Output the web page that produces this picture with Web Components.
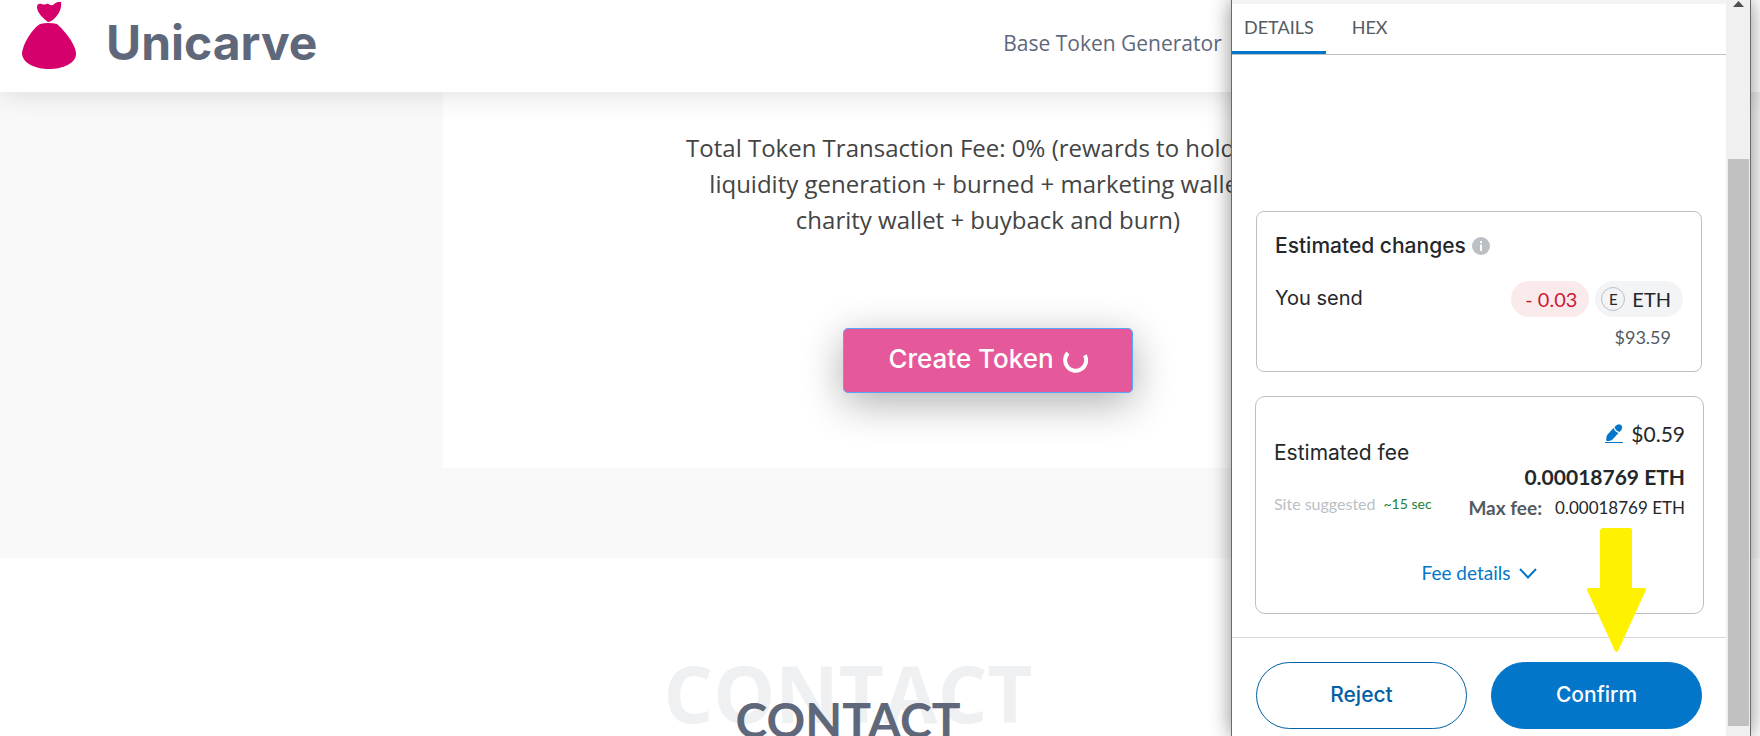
<!DOCTYPE html>
<html lang="en">
<head>
  <meta charset="utf-8">
  <meta name="viewport" content="width=device-width, initial-scale=1">
  <title>Unicarve</title>
  <style>
    :root {
      --ink: #24272a;
      --muted: #535a61;
      --line: #bbc0c5;
      --blue: #0376c9;
      --slate: #5f687b;
      --font-body: "Open Sans", sans-serif;
      --font-heading: Inter, sans-serif;
      --font-wallet: Inter, sans-serif;
      --font-number: Lato, sans-serif;
    }
    body {
      margin: 0;
      height: 100vh;
      overflow: hidden;
      position: relative;
      background: #fff;
      font-family: var(--font-body);
    }
  </style>
</head>
<body>
  <site-header></site-header>
  <token-section>
    Total Token Transaction Fee: 0% (rewards to holders + liquidity generation + burned + marketing wallet + charity wallet + buyback and burn)
  </token-section>
  <contact-heading>CONTACT</contact-heading>
  <wallet-popup>
    <wallet-tabs></wallet-tabs>
    <wallet-changes></wallet-changes>
    <wallet-fee></wallet-fee>
    <wallet-actions slot="footer"></wallet-actions>
  </wallet-popup>

  <script>
    class SiteHeader extends HTMLElement {
      connectedCallback() {
        this.attachShadow({ mode: 'open' });
        this.shadowRoot.innerHTML = `
      <style>
        :host {
          display: block;
          position: relative;
          z-index: 1;
          background: #fff;
          box-shadow: 0 2px 30px rgba(0, 0, 0, 0.13);
        }
        header {
          display: grid;
          grid-template-columns: 57fr 43fr;
          align-items: center;
          padding: 2px 0 9px;
        }
        a {
          color: var(--slate);
          text-decoration: none;
        }
        .logo {
          display: flex;
          align-items: center;
          gap: 30px;
          padding-left: 22px;
          font: 700 48px/48px var(--font-heading);
        }
        .logo svg {
          width: 54px;
          height: 81px;
        }
        nav a {
          font-size: 21px;
          line-height: 28px;
        }
      </style>
      <header>
        <a href="#" class="logo">
          <svg viewBox="0 0 54 81" fill="#d6006c" aria-hidden="true">
            <path d="M26 20C22 17 15 11 15 5C15 2 17 1 20 2Q22 3 24 2Q26 1 28 3Q31 4 32 2Q36 -1 39 0C40 6 37 12 33 16Q29 20 26 20Z"/>
            <path d="M18 22Q26 20 35 22C43 29 54 43 54 52C54 61 41 67 27 67C13 67 0 61 0 51C1 42 9 28 18 22Z"/>
          </svg>
          <span>Unicarve</span>
        </a>
        <nav><a href="#generator">Base Token Generator</a></nav>
      </header>
    `;
      }
    }

    class TokenSection extends HTMLElement {
      connectedCallback() {
        this.attachShadow({ mode: 'open' });
        this.shadowRoot.innerHTML = `
      <style>
        :host {
          display: block;
          background: #f9f9f9;
          padding: 0 64px 90px 0;
        }
        .container {
          max-width: 1370px;
          margin: 0 auto;
          padding-left: 280px;
          box-sizing: border-box;
        }
        .card {
          display: flex;
          flex-direction: column;
          align-items: center;
          gap: 90px;
          padding: 38px 24px 75px;
          background: #fff;
        }
        p {
          margin: 0;
          max-width: 616px;
          text-align: center;
          color: #444;
          font-size: 24px;
          line-height: 36px;
        }
        button {
          display: flex;
          align-items: center;
          gap: 8px;
          padding: 14px 44px 17px;
          border: 1px solid #58a6f7;
          border-radius: 5px;
          background: #e5589a;
          color: #fff;
          font: 500 26px/32px var(--font-heading);
          box-shadow: 0 10px 40px rgba(0, 0, 0, 0.32);
        }
        svg {
          width: 26px;
          height: 26px;
          margin-top: 4px;
        }
      </style>
      <div class="container">
        <div class="card">
          <p><slot></slot></p>
          <button type="button">
            <span>Create Token</span>
            <svg viewBox="0 0 26 26" fill="none" stroke="#fff" stroke-width="4" aria-hidden="true">
              <path d="M6 5A10.500 10.500 0 1 0 22.800 7.200"/>
            </svg>
          </button>
        </div>
      </div>
    `;
      }
    }

    class ContactHeading extends HTMLElement {
      connectedCallback() {
        this.attachShadow({ mode: 'open' });
        this.shadowRoot.innerHTML = `
      <style>
        :host {
          display: block;
          padding: 138px 64px 0 0;
        }
        h2 {
          position: relative;
          margin: 0;
          text-align: center;
          color: var(--slate);
          font: 700 48px/48px var(--font-number);
        }
        .back {
          position: absolute;
          inset: -42px 0 auto;
          color: #eff0f2;
          font: 700 78px/78px var(--font-body);
        }
        .front {
          position: relative;
        }
      </style>
      <h2>
        <span class="back" aria-hidden="true">CONTACT</span>
        <span class="front"><slot></slot></span>
      </h2>
    `;
      }
    }

    class WalletPopup extends HTMLElement {
      connectedCallback() {
        this.attachShadow({ mode: 'open' });
        this.shadowRoot.innerHTML = `
      <style>
        :host {
          position: absolute;
          top: 0;
          right: 9px;
          bottom: 0;
          z-index: 2;
          width: 520px;
          max-width: 100%;
          box-sizing: border-box;
          display: grid;
          grid-template-columns: 1fr 24px;
          grid-template-rows: minmax(0, 1fr);
          border: solid #6a6a6a;
          border-width: 0 1px;
          background: #fff;
          color: var(--ink);
          box-shadow: 0 0 20px rgba(0, 0, 0, 0.45);
        }
        .content {
          border-top: 4px solid #f2f4f6;
        }
        .rail {
          display: flex;
          flex-direction: column;
          padding: 0 1px 0 2px;
          background: #f0f0f0;
        }
        .rail svg {
          height: 22px;
        }
        .before {
          flex: 137;
        }
        .thumb {
          flex: 567;
          background: #c1c1c1;
        }
        .after {
          flex: 10;
        }
      </style>
      <div class="content">
        <slot></slot>
        <slot name="footer"></slot>
      </div>
      <div class="rail" aria-hidden="true">
        <svg viewBox="0 0 21 22" fill="#505050"><path d="M5 7L10.500 1L16 7Z"/></svg>
        <div class="before"></div>
        <div class="thumb"></div>
        <div class="after"></div>
      </div>
    `;
      }
    }

    class WalletTabs extends HTMLElement {
      connectedCallback() {
        this.attachShadow({ mode: 'open' });
        this.shadowRoot.innerHTML = `
      <style>
        :host {
          display: flex;
          gap: 14px;
          border-bottom: 1px solid var(--line);
          margin-bottom: 156px;
        }
        button {
          padding: 11px 12px 12px;
          border: 0;
          border-bottom: 3px solid transparent;
          background: none;
          color: var(--muted);
          font: 400 18px/24px var(--font-number);
        }
        .active {
          border-bottom-color: var(--blue);
        }
      </style>
      <button type="button" class="active">DETAILS</button>
      <button type="button">HEX</button>
    `;
      }
    }

    class WalletChanges extends HTMLElement {
      connectedCallback() {
        this.attachShadow({ mode: 'open' });
        this.shadowRoot.innerHTML = `
      <style>
        :host {
          display: block;
          margin: 0 24px;
          padding: 20px 18px 22px;
          border: 1px solid var(--line);
          border-radius: 8px;
        }
        h3 {
          display: flex;
          align-items: center;
          gap: 6px;
          margin: 0 0 21px;
          font: 500 21px/28px var(--font-wallet);
        }
        h3 svg {
          width: 18px;
          height: 18px;
        }
        .row {
          display: flex;
          align-items: flex-start;
          gap: 6px;
        }
        .label {
          flex: 1;
          font: 400 20px/34px var(--font-wallet);
        }
        .pill {
          display: flex;
          align-items: center;
          gap: 7px;
          height: 36px;
          box-sizing: border-box;
          padding: 0 12px 0 14px;
          border-radius: 18px;
          background: #f2f4f6;
          font: 400 20px/28px var(--font-number);
        }
        .minus {
          background: #fbeaec;
          color: #ca1b35;
        }
        .asset {
          padding-left: 6px;
        }
        .token {
          width: 24px;
          height: 24px;
          box-sizing: border-box;
          border: 1px solid var(--line);
          border-radius: 50%;
          text-align: center;
          font-size: 15px;
          line-height: 22px;
        }
        .fiat {
          margin-top: 8px;
          padding-right: 12px;
          text-align: right;
          color: var(--muted);
          font: 400 18px/24px var(--font-number);
        }
      </style>
      <h3>
        Estimated changes
        <svg viewBox="0 0 18 18" aria-hidden="true">
          <circle cx="9" cy="9" r="9" fill="#bbc0c5"/>
          <path d="M8 4h2v2H8zM8 7.500h2V14H8z" fill="#fff"/>
        </svg>
      </h3>
      <div class="row">
        <span class="label">You send</span>
        <span class="pill minus">- 0.03</span>
        <span class="pill asset"><span class="token">E</span>ETH</span>
      </div>
      <div class="fiat">$93.59</div>
    `;
      }
    }

    class WalletFee extends HTMLElement {
      connectedCallback() {
        this.attachShadow({ mode: 'open' });
        this.shadowRoot.innerHTML = `
      <style>
        :host {
          display: block;
          margin: 24px 22px 23px 23px;
          padding: 23px 18px 28px;
          border: 1px solid var(--line);
          border-radius: 10px;
          font: 400 21px/28px var(--font-number);
        }
        .columns {
          display: flex;
          justify-content: space-between;
        }
        .left {
          display: flex;
          flex-direction: column;
          gap: 25px;
          padding-top: 19px;
        }
        .label {
          font-family: var(--font-wallet);
        }
        .speed {
          display: flex;
          gap: 8px;
          color: var(--line);
          font-size: 16px;
          line-height: 24px;
        }
        .time {
          color: #1c8234;
          font-size: 14px;
        }
        .right {
          text-align: right;
        }
        .fiat {
          display: flex;
          align-items: center;
          justify-content: flex-end;
          gap: 8px;
          margin-bottom: 15px;
        }
        .edit {
          display: flex;
          padding: 0;
          border: 0;
          background: none;
        }
        .edit svg {
          width: 18px;
          height: 20px;
        }
        .amount {
          font-weight: 700;
          margin-bottom: 5px;
        }
        .max {
          display: flex;
          justify-content: flex-end;
          gap: 13px;
          font-size: 17px;
          line-height: 24px;
        }
        .max b {
          color: var(--muted);
          font-size: 19px;
        }
        .details {
          display: flex;
          align-items: center;
          gap: 9px;
          margin: 41px auto 0;
          padding: 0;
          border: 0;
          background: none;
          color: var(--blue);
          font: 400 19px/24px var(--font-number);
        }
        .details svg {
          width: 18px;
          height: 11px;
        }
      </style>
      <div class="columns">
        <div class="left">
          <span class="label">Estimated fee</span>
          <span class="speed"><span>Site suggested</span><span class="time">~15 sec</span></span>
        </div>
        <div class="right">
          <div class="fiat">
            <button type="button" class="edit" aria-label="Edit">
              <svg viewBox="0 0 18 20" fill="#0376c9" aria-hidden="true">
                <path d="M8.500 4Q10 8 13.500 9L7.500 15.500Q6 17 1.500 17Q0.500 13 3 10Z"/>
                <path d="M9.500 3Q13 -1 16 1Q19 4 14.500 8Q10.500 7 9.500 3Z"/>
                <path d="M0 18h18v1H0z"/>
              </svg>
            </button>
            <span>$0.59</span>
          </div>
          <div class="amount">0.00018769 ETH</div>
          <div class="max"><b>Max fee:</b><span>0.00018769 ETH</span></div>
        </div>
      </div>
      <button type="button" class="details">
        Fee details
        <svg viewBox="0 0 18 11" fill="none" stroke="#0376c9" stroke-width="2" aria-hidden="true"><path d="M1 1L9 9.500L17 1"/></svg>
      </button>
    `;
      }
    }

    class WalletActions extends HTMLElement {
      connectedCallback() {
        this.attachShadow({ mode: 'open' });
        this.shadowRoot.innerHTML = `
      <style>
        :host {
          position: relative;
          display: flex;
          gap: 24px;
          padding: 24px;
          border-top: 1px solid #d6d9dc;
        }
        button {
          flex: 1;
          padding: 18px 0 19px;
          border: 1px solid #0260a4;
          border-radius: 34px;
          background: #fff;
          color: #0260a4;
          font: 500 21px/28px var(--font-wallet);
        }
        .confirm {
          border-color: var(--blue);
          background: var(--blue);
          color: #fff;
        }
        .arrow {
          position: absolute;
          top: -110px;
          right: 80px;
          width: 59px;
          height: 124px;
        }
      </style>
      <button type="button">Reject</button>
      <button type="button" class="confirm">Confirm</button>
      <svg class="arrow" viewBox="0 0 59 124" fill="#fff200" aria-hidden="true">
        <path d="M15 0H43Q45 0 45 2V60H58Q59 60 59 62L31 123Q29 125 28 123L0 62Q0 60 1 60H13V2Z"/>
      </svg>
    `;
      }
    }

    customElements.define('site-header', SiteHeader);
    customElements.define('token-section', TokenSection);
    customElements.define('contact-heading', ContactHeading);
    customElements.define('wallet-popup', WalletPopup);
    customElements.define('wallet-tabs', WalletTabs);
    customElements.define('wallet-changes', WalletChanges);
    customElements.define('wallet-fee', WalletFee);
    customElements.define('wallet-actions', WalletActions);
  </script>
</body>
</html>
